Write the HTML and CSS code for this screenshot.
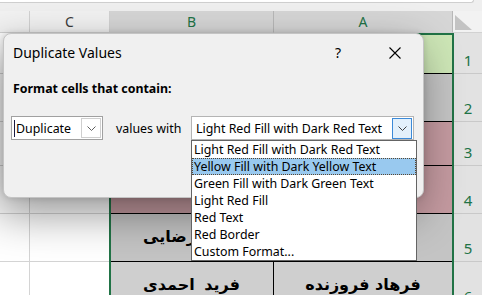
FILE: index.html
```html
<!DOCTYPE html>
<html lang="en">
<head>
  <meta charset="UTF-8" />
  <meta name="viewport" content="width=device-width, initial-scale=1" />
  <title>Duplicate Values</title>
  <link rel="stylesheet" href="styles.css">
</head>
<body>

  <div class="excel">
    <div class="formula-edge"></div>

    <div class="sheet">
      <div class="col-h"></div>
      <div class="col-h">C</div>
      <div class="col-h sel">B</div>
      <div class="col-h sel">A</div>
      <div class="corner">
        <svg width="17" height="15" viewBox="0 0 17 15"><path d="M0 0 L17 15 L0 15 Z" fill="#c3c3c3"/></svg>
      </div>

      <div class="cell"></div><div class="cell"></div>
      <div class="data green"></div><div class="data green"></div>
      <div class="row-h">1</div>

      <div class="cell"></div><div class="cell"></div>
      <div class="data gray"></div><div class="data gray"></div>
      <div class="row-h">2</div>

      <div class="cell"></div><div class="cell"></div>
      <div class="data pink"></div><div class="data pink"></div>
      <div class="row-h">3</div>

      <div class="cell"></div><div class="cell"></div>
      <div class="data pink"></div><div class="data pink"></div>
      <div class="row-h">4</div>

      <div class="cell"></div><div class="cell"></div>
      <div class="data gray" dir="rtl">مریم رضایی</div><div class="data gray" dir="rtl">سارا کریمی</div>
      <div class="row-h">5</div>

      <div class="cell"></div><div class="cell"></div>
      <div class="data light wide" dir="rtl">فرید احمدی</div><div class="data light" dir="rtl">فرهاد فروزنده</div>
      <div class="row-h">6</div>
    </div>

    <div class="selection"></div>

    <div class="dialog">
      <div class="titlebar">
        <span class="title">Duplicate Values</span>
        <span class="help">?</span>
        <span class="close">
          <svg width="12" height="12" viewBox="0 0 12 12"><path d="M0.5 0.5 L11.5 11.5 M11.5 0.5 L0.5 11.5" stroke="#000" stroke-width="1.1"/></svg>
        </span>
      </div>

      <div class="label">Format cells that contain:</div>

      <div class="rule-row">
        <div class="combo small">
          <span class="caret"></span>
          <span class="combo-text">Duplicate</span>
          <span class="drop">
            <svg width="9" height="5" viewBox="0 0 9 5"><path d="M0.5 0.5 L4.5 4.5 L8.5 0.5" fill="none" stroke="#606060"/></svg>
          </span>
        </div>
        <span class="with">values with</span>
        <div class="combo big">
          <span class="combo-text">Light Red Fill with Dark Red Text</span>
          <span class="drop open">
            <svg width="9" height="5" viewBox="0 0 9 5"><path d="M0.5 0.5 L4.5 4.5 L8.5 0.5" fill="none" stroke="#404040"/></svg>
          </span>
          <ul class="list">
            <li>Light Red Fill with Dark Red Text</li>
            <li class="hot">Yellow Fill with Dark Yellow Text</li>
            <li>Green Fill with Dark Green Text</li>
            <li>Light Red Fill</li>
            <li>Red Text</li>
            <li>Red Border</li>
            <li>Custom Format...</li>
          </ul>
        </div>
      </div>
    </div>
  </div>

</body>
</html>
```

FILE: styles.css
```css
* {
  box-sizing: border-box;
}
body {
  margin: 0;
  width: 482px;
  height: 295px;
  overflow: hidden;
  font-family: "Noto Sans", "Segoe UI", sans-serif;
  background: #fff;
}
.excel {
  position: relative;
  height: 295px;
  overflow: hidden;
  background: #efefef;
}
.formula-edge {
  width: 474px;
  height: 3px;
  background: #fff;
  border-right: 1px solid #cfcfcf;
  border-bottom: 1px solid #cfcfcf;
  border-bottom-right-radius: 5px;
}
.sheet {
  margin-top: 8px;
  display: grid;
  grid-template-columns: 30px 80px 164px 179px 29px;
  grid-template-rows: 22px 41px 48px 44px 48px 48px 48px;
}
.col-h {
  display: flex;
  align-items: center;
  justify-content: center;
  font-size: 14px;
  color: #3a3a3a;
  background: #f2f2f2;
  border-right: 1px solid #d2d2d2;
  border-bottom: 1px solid #d2d2d2;
}
.col-h.sel {
  background: #d6d6d6;
  color: #217346;
  border-right-color: #b8b8b8;
}
.corner {
  background: #f2f2f2;
  border-bottom: 1px solid #d2d2d2;
  padding: 4px 0 0 2px;
}
.corner svg {
  display: block;
}
.cell {
  background: #fff;
  border-right: 1px solid #d4d4d4;
  border-bottom: 1px solid #d4d4d4;
}
.data {
  display: flex;
  align-items: center;
  justify-content: center;
  padding-bottom: 2px;
  font-family: "DejaVu Sans", sans-serif;
  font-weight: bold;
  font-size: 16px;
  color: #000;
  border-right: 1px solid #000;
  border-bottom: 1px solid #000;
  white-space: nowrap;
}
.data.wide {
  word-spacing: 4px;
}
.green {
  background: #cde6b6;
}
.gray {
  background: #c4c4c4;
}
.light {
  background: #cfcfcf;
}
.pink {
  background: #c49aa0;
}
.row-h {
  display: flex;
  align-items: flex-end;
  justify-content: center;
  padding-bottom: 3px;
  font-size: 15px;
  color: #217346;
  background: #e2e2e2;
  border-bottom: 1px solid #c9c9c9;
  border-left: 1px solid #c9c9c9;
}
.selection {
  position: absolute;
  left: 109px;
  top: 33px;
  width: 345px;
  height: 280px;
  border: 2px solid #217346;
  border-bottom: none;
}

/* dialog */
.dialog {
  position: absolute;
  left: 3px;
  top: 33px;
  width: 421px;
  height: 165px;
  background: #f0f0f0;
  border: 1px solid #c4c4c4;
  border-radius: 8px;
  box-shadow: -6px 16px 44px rgba(0, 0, 0, 0.42), 0 0 6px rgba(0, 0, 0, 0.14);
  font-size: 12.4px;
  color: #000;
}
.titlebar {
  display: flex;
  align-items: center;
  height: 37px;
  padding-left: 9px;
}
.title {
  flex: 1;
  font-size: 14px;
}
.help {
  width: 40px;
  text-align: center;
  font-size: 14px;
}
.close {
  display: flex;
  justify-content: center;
  width: 46px;
  margin: 0 5px 0 14px;
}
.label {
  margin-top: 9px;
  padding-left: 9px;
  font-weight: bold;
  line-height: 17px;
}
.rule-row {
  display: flex;
  align-items: center;
  margin-top: 19px;
  padding-left: 7px;
}
.combo {
  position: relative;
  display: flex;
  align-items: center;
  height: 24px;
  background: #fff;
  border: 1px solid #a0a0a0;
}
.combo.small {
  width: 92px;
}
.combo.big {
  width: 223px;
  border-color: #b4b4b4;
}
.caret {
  width: 1px;
  height: 17px;
  margin-left: 2px;
  background: #1a1a40;
}
.combo-text {
  flex: 1;
  padding-left: 4px;
  white-space: nowrap;
}
.small .combo-text {
  padding-left: 1px;
}
.drop {
  display: flex;
  align-items: center;
  justify-content: center;
  width: 20px;
  height: 20px;
  margin-right: 1px;
  border: 1px solid #cfcfcf;
  background: #fff;
}
.drop.open {
  height: 21px;
  border-color: #3c8ad8;
  background: #e3f0fb;
}
.with {
  width: 75px;
  margin-left: 13px;
}
.list {
  position: absolute;
  left: -1px;
  top: 23px;
  width: 226px;
  margin: 0;
  padding: 0;
  list-style: none;
  background: #fff;
  border: 1px solid #646464;
}
.list li {
  height: 17px;
  line-height: 17px;
  padding-left: 2px;
  white-space: nowrap;
}
.list li.hot {
  background: #99c9ef;
  outline: 1px dotted #5a4630;
  outline-offset: -1px;
}
```
